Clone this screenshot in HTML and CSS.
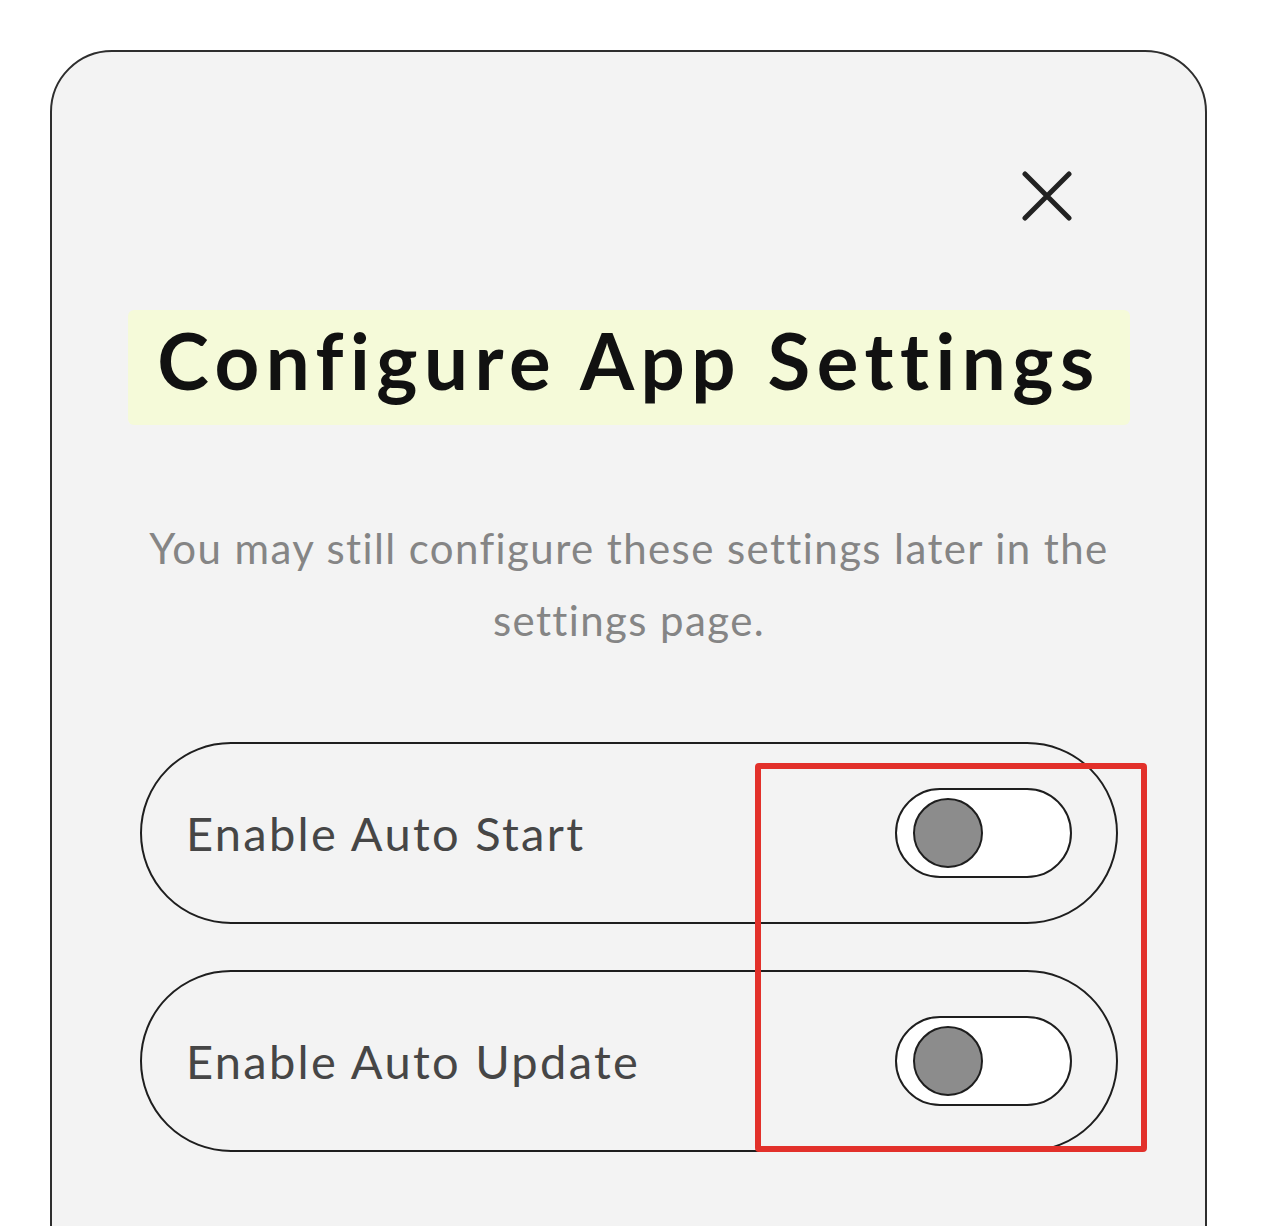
FILE: index.html
```html
<!DOCTYPE html>
<html lang="en">
<head>
  <meta charset="UTF-8">
  <title>Configure App Settings</title>
  <link rel="stylesheet" href="styles.css">
</head>
<body>
  <div class="modal">
    <!-- Close -->
    <div class="modal-top">
      <button class="close" aria-label="Close">
        <svg width="50" height="50" viewBox="0 0 50 50">
          <path d="M3 3 L47 47 M47 3 L3 47" stroke="#222" stroke-width="5" stroke-linecap="round" fill="none"/>
        </svg>
      </button>
    </div>

    <!-- Heading -->
    <h1 class="title">Configure App Settings</h1>
    <p class="subtitle">You may still configure these settings later in the settings page.</p>

    <!-- Options -->
    <div class="options">
      <div class="option">
        <span class="label">Enable Auto Start</span>
        <span class="toggle"><span class="knob"></span></span>
      </div>
      <div class="option">
        <span class="label">Enable Auto Update</span>
        <span class="toggle"><span class="knob"></span></span>
      </div>
      <div class="mark"></div>
    </div>
  </div>
</body>
</html>
```

FILE: styles.css
```css
body {
  margin: 0;
  background: white;
  font-family: Lato, "Liberation Sans", sans-serif;
}

.modal {
  margin: 50px 0 0 50px;
  width: 1157px;
  min-height: 1300px;
  box-sizing: border-box;
  border: 2px solid #2e2e2e;
  border-radius: 62px;
  background: #f3f3f3;
  padding: 120px 75px 0 76px;
}

.modal-top {
  display: flex;
  justify-content: flex-end;
  padding-right: 58px;
}

.close {
  width: 50px;
  height: 48px;
  padding: 0;
  border: none;
  background: none;
  display: flex;
  align-items: center;
  justify-content: center;
}

.title {
  margin: 90px 0 0;
  height: 115px;
  box-sizing: border-box;
  padding-bottom: 14px;
  line-height: 101px;
  background: #f5fad9;
  border-radius: 6px;
  text-align: center;
  font-size: 78px;
  font-weight: 700;
  letter-spacing: 6.5px;
  color: #111;
}

.subtitle {
  margin: 87px 0 0;
  text-align: center;
  font-size: 42px;
  line-height: 72px;
  letter-spacing: 1.4px;
  color: #858585;
}

.options {
  position: relative;
  margin: 86px 12px 0 12px;
  display: flex;
  flex-direction: column;
  gap: 46px;
}

.option {
  display: flex;
  align-items: center;
  justify-content: space-between;
  border: 2px solid #1e1e1e;
  border-radius: 91px;
  padding: 44px;
}

.label {
  font-size: 47px;
  letter-spacing: 2.3px;
  color: #464646;
}

.toggle {
  width: 177px;
  height: 90px;
  box-sizing: border-box;
  border: 2px solid #1e1e1e;
  border-radius: 45px;
  background: white;
  display: flex;
  align-items: center;
  padding-left: 16px;
}

.knob {
  width: 70px;
  height: 70px;
  box-sizing: border-box;
  border-radius: 50%;
  border: 2px solid #1e1e1e;
  background: #8c8c8c;
}

/* red annotation box */
.mark {
  position: absolute;
  left: 615px;
  top: 21px;
  width: 392px;
  height: 389px;
  box-sizing: border-box;
  border: 6px solid #e2302a;
  border-radius: 4px;
}
```
